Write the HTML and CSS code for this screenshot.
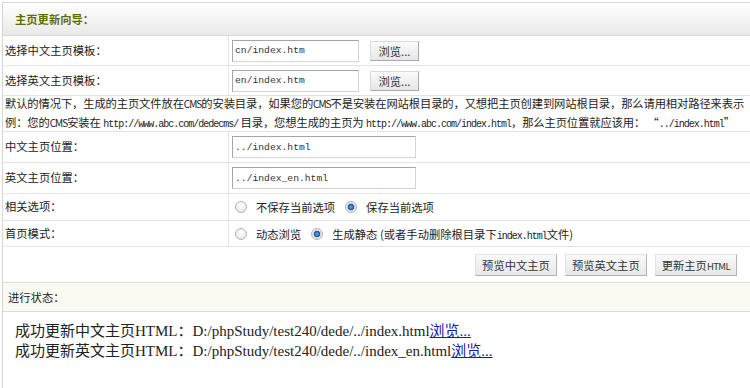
FILE: index.html
```html
<!DOCTYPE html>
<html lang="zh-CN">
<head>
<meta charset="UTF-8">
<title>主页更新向导</title>
<link rel="stylesheet" href="styles.css">
</head>
<body>
<div class="main">
  <!-- 标题 -->
  <div class="head">主页更新向导：</div>

  <div class="row">
    <div class="label">选择中文主页模板：</div>
    <div class="value">
      <input type="text" class="ipt ipt-tpl" value="cn/index.htm">
      <button type="button" class="btn-browse">浏览...</button>
    </div>
  </div>
  <div class="row">
    <div class="label">选择英文主页模板：</div>
    <div class="value">
      <input type="text" class="ipt ipt-tpl" value="en/index.htm">
      <button type="button" class="btn-browse">浏览...</button>
    </div>
  </div>

  <div class="desc">
    默认的情况下，生成的主页文件放在<span class="abbr">CMS</span>的安装目录，如果您的<span class="abbr">CMS</span>不是安装在网站根目录的，又想把主页创建到网站根目录，那么请用相对路径来表示<br>
    例：您的<span class="abbr">CMS</span>安装在 <span class="code">http://www.abc.com/dedecms/</span> 目录，您想生成的主页为 <span class="code">http://www.abc.com/index.html</span>，那么主页位置就应该用： “<span class="code">../index.html</span>”
  </div>

  <div class="row row-pos">
    <div class="label">中文主页位置：</div>
    <div class="value"><input type="text" class="ipt ipt-pos" value="../index.html"></div>
  </div>
  <div class="row row-pos">
    <div class="label">英文主页位置：</div>
    <div class="value"><input type="text" class="ipt ipt-pos" value="../index_en.html"></div>
  </div>

  <div class="row row-opt">
    <div class="label">相关选项：</div>
    <div class="value">
      <label class="opt"><input type="radio" name="saveset" class="radio"><span>不保存当前选项</span></label>
      <label class="opt"><input type="radio" name="saveset" class="radio" checked><span>保存当前选项</span></label>
    </div>
  </div>
  <div class="row row-mode">
    <div class="label">首页模式：</div>
    <div class="value">
      <label class="opt"><input type="radio" name="mode" class="radio"><span>动态浏览</span></label>
      <label class="opt"><input type="radio" name="mode" class="radio" checked><span>生成静态 (或者手动删除根目录下<span class="code">index.html</span>文件)</span></label>
    </div>
  </div>

  <div class="actions">
    <button type="button" class="btn">预览中文主页</button>
    <button type="button" class="btn">预览英文主页</button>
    <button type="button" class="btn">更新主页<span class="btn-en">HTML</span></button>
  </div>

  <!-- 进行状态 -->
  <div class="state-head">进行状态：</div>
  <div class="state-body">
    成功更新中文主页HTML：D:/phpStudy/test240/dede/../index.html<a href="#">浏览...</a><br>
    成功更新英文主页HTML：D:/phpStudy/test240/dede/../index_en.html<a href="#">浏览...</a>
  </div>
</div>
</body>
</html>
```

FILE: styles.css
```css
html, body {
margin: 0;
padding: 0;
background: #fff;
overflow: hidden;
}
body {
font-family: "Noto Sans CJK SC", "Liberation Sans", sans-serif;
font-size: 11.3px;
color: #222;
}
.main {
width: 760px;
margin: 2px 0 0 2px;
border-left: 1px solid #d6d6d6;
border-top: 1px solid #d6d6d6;
}
.head {
height: 33px;
box-sizing: border-box;
padding-left: 12px;
display: flex;
align-items: center;
font-weight: bold;
color: #626b00;
background: linear-gradient(180deg, #ffffff 0%, #f6f6f6 40%, #e9e9e9 100%);
border-bottom: 1px solid #d9d9d9;
}
.row {
display: grid;
grid-template-columns: 226px 1fr;
height: 30px;
box-sizing: border-box;
border-bottom: 1px solid #e3e3e3;
}
.row-pos { height: 31px; }
.row-opt { height: 27px; }
.row-mode { height: 26px; }
.label {
display: flex;
align-items: center;
padding-left: 2px;
padding-bottom: 2px;
border-right: 1px solid #e3e3e3;
}
.value {
display: flex;
align-items: center;
padding-left: 3px;
}
.ipt {
height: 22px;
box-sizing: border-box;
padding: 0 2px;
border: 1px solid;
border-color: #a5a5a5 #d4d4d4 #d4d4d4 #a5a5a5;
font-family: "Liberation Mono", monospace;
font-size: 9.7px;
color: #333;
outline: none;
}
.ipt-tpl { width: 127px; }
.ipt-pos { width: 184px; }
.btn-browse {
width: 49px;
height: 20px;
margin-left: 11px;
padding: 0;
border: 1px solid;
border-color: #dadada #a9a9a9 #a9a9a9 #dadada;
background: linear-gradient(180deg, #fbfbfb 0%, #e6e6e6 100%);
font-family: inherit;
font-size: 11.3px;
color: #333;
}

/* 说明文字 */
.desc {
height: 38px;
box-sizing: border-box;
margin-top: -2px;
padding-left: 2px;
line-height: 19px;
letter-spacing: -0.12px;
white-space: nowrap;
overflow: hidden;
border-bottom: 1px solid #e3e3e3;
}
.abbr {
font-size: 10px;
letter-spacing: -1px;
}
.code {
font-family: "Liberation Mono", monospace;
font-size: 10px;
letter-spacing: -1px;
}
.opt {
display: flex;
align-items: center;
margin-right: 10px;
}
.radio {
-webkit-appearance: none;
appearance: none;
width: 12px;
height: 12px;
margin: 0 9px 0 3px;
box-sizing: border-box;
border: 1px solid #b5b5b5;
border-radius: 50%;
background: radial-gradient(circle at 50% 35%, #ffffff 0%, #e9e9e9 70%, #d8d8d8 100%);
}
.radio:checked {
background: radial-gradient(circle, #6aa8e6 0px, #1f63ad 2.5px, #1f63ad 3px, #dcdcdc 3.6px, #f6f6f6 100%);
}
.opt + .opt .radio { margin-left: 0; }

/* 操作按钮 */
.actions {
height: 36px;
box-sizing: border-box;
display: flex;
justify-content: flex-end;
align-items: center;
gap: 8px;
padding: 1px 26px 0 0;
border-bottom: 1px solid #dedede;
}
.btn {
height: 22px;
padding: 0 6px;
border: 1px solid;
border-color: #e2e2e2 #b3b3b3 #b3b3b3 #e2e2e2;
background: linear-gradient(180deg, #f9f9f9 0%, #e8e8e8 100%);
font-family: inherit;
font-size: 11.3px;
color: #333;
}
.btn-en {
font-size: 9.5px;
letter-spacing: -0.6px;
}
.state-head {
height: 29px;
box-sizing: border-box;
padding-left: 5px;
display: flex;
align-items: center;
background: #fafaf0;
border-bottom: 1px solid #dcdcd4;
}
.state-body {
height: 67px;
padding: 9px 0 0 12px;
font-family: "Liberation Serif", "Noto Sans CJK SC", serif;
font-size: 15px;
line-height: 20px;
color: #222;
}
.state-body a {
color: #1a1aa8;
}
```
